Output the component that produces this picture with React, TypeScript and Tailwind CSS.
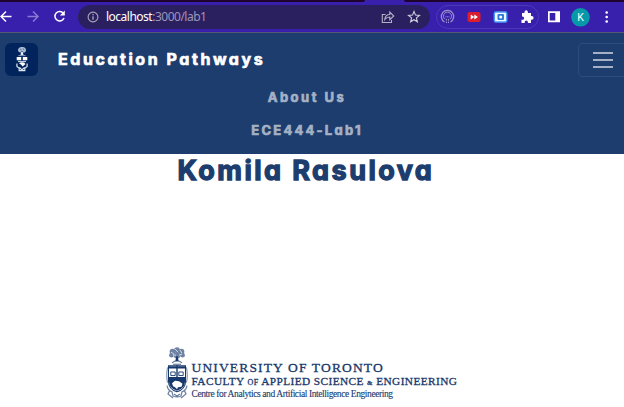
import React from "react";

const rounded =
  "font-['Inter',sans-serif] font-bold whitespace-nowrap [font-feature-settings:'cv11'] [stroke-linejoin:round]";

function Crest({ className, ink, paper }: { className: string; ink: string; paper: string }) {
  return (
    <svg viewBox="0 0 22 52" preserveAspectRatio="none" className={className} fill="none">
      <g fill={ink} opacity=".62">
        <circle cx="11" cy="3" r="2.8" />
        <circle cx="6.5" cy="4.5" r="2.8" />
        <circle cx="15.5" cy="4.5" r="2.8" />
        <circle cx="5.5" cy="8" r="2.4" />
        <circle cx="16.5" cy="8" r="2.4" />
        <circle cx="11" cy="8" r="3.2" />
      </g>
      <path d="M5 5l3 2M9 2l3 3M14 3l2 3M7 8h3M13 8l3-1" stroke={paper} strokeWidth=".7" />
      <path d="M10.2 9h1.6l.8 5h-3.2z" fill={ink} />
      <path d="M6 15.5q5-4 10 0M7 17h8" stroke={ink} strokeWidth="1" opacity=".75" />
      <path d="M1.500 20q-1.500 8 0 15M20.500 20q1.500 8 0 15" stroke={ink} strokeWidth="1" opacity=".6" />
      <path d="M2.500 18.500h17V34q0 7-8.500 10Q2.500 41 2.500 34z" fill={paper} stroke={ink} strokeWidth="1" />
      <path d="M3 19h16v2H3zM3 29.500h16V34q0 6-8 9-8-3-8-9z" fill={ink} />
      <path d="M10.300 18h1.400v12h-1.400z" fill={ink} />
      <path d="M4.800 24.500h4.400v3.500H4.800zM12.800 24.500h4.400v3.500h-4.400z" fill={paper} stroke={ink} strokeWidth=".9" />
      <path d="M6 35.500l3-2.500 4 .5 3.500 2.500-1 3-3.500.5-1 2-2-2-2-1z" fill={paper} />
      <path d="M1 38q1 5 5 6l1 4q4 2 8 0l1-4q4-1 5-6M4 42l-2 4 5 4M18 42l2 4-5 4M8 46l3 2 3-2" stroke={ink} strokeWidth="1.200" opacity=".65" />
    </svg>
  );
}

function BrandCrest() {
  return (
    <svg viewBox="0 0 12 25" className="w-3 h-[25px]" fill="none">
      <path d="M6 0c2-.2 4 1 4 3s-1 2.500-2.500 2.500h-3C3 5.500 2 4.500 2 3s2-3.200 4-3z" fill="#a9b9d0" />
      <path d="M4 2l1.500 1M7 1.500l1 1.500M5 4.500h2" stroke="#00245b" strokeWidth=".5" />
      <path d="M5.200 5h1.600l.7 3h-3z" fill="#e6edf5" />
      <path d="M2.500 8.600h7" stroke="#8ca1c0" />
      <path d="M.700 10h4.500v3.200H.700zM6.800 10h4.500v3.200H6.800z" fill="#fff" />
      <path d="M2 14.500h8" stroke="#c2cede" strokeWidth="1.200" />
      <path d="M3 16.200l2-1 3 .3 1.500 1.500-1.700 1.500-1.300 1-1-1.400z" fill="#fff" />
      <path d="M.900 16.500v3l2.300 1.700v2.500h5.600v-2.500l2.300-1.700v-3M3.500 20.500L6 23l2.500-2.500" stroke="#dbe4ef" strokeWidth="1.200" />
    </svg>
  );
}

function BrowserBar() {
  return (
    <header className="h-[33px] bg-[#3820ad] border-b border-[#555775] flex flex-col shrink-0">
      <div className="flex h-[2px] justify-between">
        <div className="w-[365px] bg-[#1d032d] rounded-br-sm" />
        <div className="w-[220px] bg-[#1d032d] rounded-bl-sm" />
      </div>
      <div className="flex h-[30px] items-center">
        <svg viewBox="0 0 72 24" className="w-[72px] h-6 shrink-0" fill="none" strokeWidth="1.5">
          <path d="M11.500 11.500H1M6 6.500l-5 5 5 5" stroke="#fff" />
          <path d="M27.500 11.500H38M33 6.500l5 5-5 5" stroke="#887bd1" />
          <path d="M63.400 8.400A4.700 4.700 0 1 0 64 13" stroke="#fff" />
          <path d="M64.800 5.500v5h-5z" fill="#fff" />
        </svg>
        <div className="ml-[6px] h-6 w-[352px] shrink-0 rounded-full bg-[#2b205f] flex items-center">
          <svg viewBox="0 0 12 12" className="ml-[9px] size-[12px] shrink-0" fill="none" stroke="#aba7bd">
            <circle cx="6" cy="6" r="4.900" strokeWidth="1.100" />
            <path d="M6 5.300v3.400M6 3v1.200" strokeWidth="1.300" />
          </svg>
          <div className="ml-[7px] w-[274px] shrink-0 font-['Noto_Sans',sans-serif] text-[12px] leading-5 tracking-[-0.500px] text-[#9c96bb]">
            <span className="text-white">localhost</span>:3000/lab1
          </div>
          <svg viewBox="0 0 46 18" className="w-[46px] h-[18px] shrink-0" fill="none" stroke="#b4b0c5" strokeWidth="1.100">
            <path d="M5.500 6.500H2.300v8h9.200V12M4.800 11.500c.3-3.500 2.300-5 5-5V4l4 4-4 3.700V9c-2.200 0-3.800.8-5 2.500z" />
            <path d="M34 3.500l1.500 3.600 4 .3-3.100 2.500 1 3.900-3.400-2.100-3.400 2.100 1-3.900-3.100-2.500 4-.3z" stroke="#d2cfdf" />
          </svg>
        </div>
        <svg viewBox="0 0 194 24" className="w-[194px] h-6 shrink-0" fill="none">
          <rect x="6.500" y=".5" width="102" height="23" rx="11.500" stroke="#4b39b9" />
          <g stroke="#9a91c8" strokeWidth="1.300">
            <path d="M14.500 17A6.200 6.200 0 1 1 20.500 17" />
            <path d="M15 14.300a4 4 0 1 1 5 0" strokeWidth="1" />
            <path d="M15.500 11.800h4M16.500 14v4M18.500 14v4" strokeWidth="1" strokeDasharray="1 .5" />
          </g>
          <rect x="37.500" y="7" width="13" height="10" rx="2" fill="#dc1e2c" />
          <path d="M40.700 9.600l3.600 2.400-3.600 2.400zM44.300 9.600l3.600 2.400-3.600 2.400z" fill="#fff" />
          <rect x="64.300" y="7" width="12.500" height="10" rx="1.500" fill="#eef8ff" stroke="#4b9afa" strokeWidth="1.400" />
          <rect x="67.500" y="9" width="6.500" height="6" rx="1" fill="#3179df" />
          <circle cx="70.700" cy="12" r="1.500" fill="#fff" />
          <path d="M92 8h2.500V7a1.700 1.700 0 0 1 3.400 0v1h3.100v3.100h.8a1.800 1.800 0 0 1 0 3.600h-.8v3.300h-3.100v-1a1.600 1.600 0 0 0-3.200 0v1H91.500v-3.200h1a1.600 1.600 0 0 0 0-3.300h-.5z" fill="#fff" />
          <path d="M118 6.300h12v11h-12zM119.700 8v7.600h5.600V8z" fill="#fff" fillRule="evenodd" />
          <circle cx="150.500" cy="12.300" r="9.300" fill="#0799a8" />
          <text x="150.500" y="16" textAnchor="middle" className="font-['Roboto',sans-serif] text-[10.500px]" fill="#fff">K</text>
          <g fill="#fff"><circle cx="176.700" cy="7.500" r="1.300" /><circle cx="176.700" cy="12" r="1.300" /><circle cx="176.700" cy="16.500" r="1.300" /></g>
        </svg>
      </div>
    </header>
  );
}

export default function App() {
  return (
    <div className="w-[624px] h-[407px] overflow-hidden bg-white flex flex-col">
      <BrowserBar />
      <nav className="h-[121px] shrink-0 bg-[#1c3d6e] flex flex-col">
        <div className="flex items-center mt-[10px] h-[33px]">
          <div className="ml-[5px] size-[33px] shrink-0 rounded-[6px] bg-[#00245b] flex items-center justify-center">
            <BrandCrest />
          </div>
          <div className={`${rounded} ml-[20px] mb-[2px] w-[240px] text-[16px] leading-[30px] tracking-[2.550px] text-white [-webkit-text-stroke:0.700px_currentColor]`}>Education Pathways</div>
          <button className="ml-auto -mr-1 h-[34px] w-[50px] shrink-0 rounded-[4px] border border-[#2d4c79] flex flex-col items-center justify-center gap-[5px]" aria-label="Toggle navigation">
            <span className="h-[2px] w-5 bg-[#a4b1c5]" />
            <span className="h-[2px] w-5 bg-[#a4b1c5]" />
            <span className="h-[2px] w-5 bg-[#a4b1c5]" />
          </button>
        </div>
        <div className="mt-[5px] w-[614px] flex flex-col items-center text-[#a4b1c5] [-webkit-text-stroke:0.700px_currentColor]">
          <a className={`${rounded} h-[33px] text-[13px] leading-[33px] tracking-[2.500px]`}>About Us</a>
          <a className={`${rounded} h-[33px] text-[13px] leading-[33px] tracking-[2.250px]`}>ECE444-Lab1</a>
        </div>
      </nav>
      <main className="flex flex-1 flex-col justify-between">
        <h1 className={`${rounded} ml-[177.500px] text-[27px] leading-[34px] tracking-[2.450px] text-[#1c3d6e] [-webkit-text-stroke:1.300px_currentColor]`}>Komila Rasulova</h1>
        <footer className="ml-[166px] mb-[6px] flex h-[54px] text-[#17386c] whitespace-nowrap font-['Liberation_Serif',serif]">
          <Crest className="w-[22px] h-[53px] shrink-0" ink="#17386c" paper="#fff" />
          <div className="ml-[3.500px] mt-[14px] flex flex-col [-webkit-text-stroke:0.300px_currentColor]">
            <div className="h-[14px] text-[13.500px] leading-[14px] tracking-[1.150px]">UNIVERSITY OF TORONTO</div>
            <div className="h-[12px] text-[11.300px] leading-[12px] tracking-[0.420px]">FACULTY <span className="text-[8px]">OF</span> APPLIED SCIENCE <span className="text-[7px]">&amp;</span> ENGINEERING</div>
            <div className="h-[14px] text-[9.500px] leading-[15px] tracking-[-0.410px] [-webkit-text-stroke:0.100px_currentColor]">Centre for Analytics and Artificial Intelligence Engineering</div>
          </div>
        </footer>
      </main>
    </div>
  );
}
